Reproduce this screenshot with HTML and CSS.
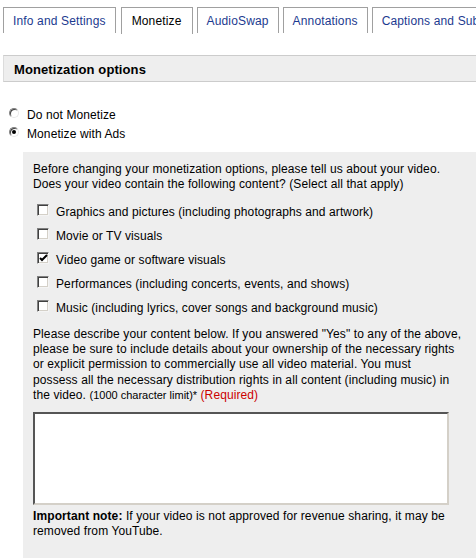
FILE: index.html
```html
<!DOCTYPE html>
<html>
<head>
<meta charset="utf-8">
<link rel="stylesheet" href="styles.css">
</head>
<body>
<div class="page">
  <div class="tabs">
    <div class="tab">Info and Settings</div>
    <div class="tab active">Monetize</div>
    <div class="tab">AudioSwap</div>
    <div class="tab">Annotations</div>
    <div class="tab">Captions and Subtitles</div>
  </div>
  <div class="section-head">Monetization options</div>
  <div class="radios">
    <label class="radio-row"><span class="radio"></span>Do not Monetize</label>
    <label class="radio-row"><span class="radio checked"></span>Monetize with Ads</label>
  </div>
  <div class="panel">
    <p class="intro">Before changing your monetization options, please tell us about your video.<br>Does your video contain the following content? (Select all that apply)</p>
    <div class="checks">
      <label class="check-row"><span class="cbox"></span>Graphics and pictures (including photographs and artwork)</label>
      <label class="check-row"><span class="cbox"></span>Movie or TV visuals</label>
      <label class="check-row"><span class="cbox checked"><svg width="9" height="9" viewBox="0 0 9 9"><path d="M1 4 L3 6 L8 1" fill="none" stroke="#000" stroke-width="2"/></svg></span>Video game or software visuals</label>
      <label class="check-row"><span class="cbox"></span>Performances (including concerts, events, and shows)</label>
      <label class="check-row"><span class="cbox"></span>Music (including lyrics, cover songs and background music)</label>
    </div>
    <p class="describe">Please describe your content below. If you answered "Yes" to any of the above,<br>please be sure to include details about your ownership of the necessary rights<br>or explicit permission to commercially use all video material. You must<br>possess all the necessary distribution rights in all content (including music) in<br>the video. <span class="small">(1000 character limit)*</span> <span class="req">(Required)</span></p>
    <div class="textarea"></div>
    <p class="note"><b>Important note:</b> If your video is not approved for revenue sharing, it may be<br>removed from YouTube.</p>
  </div>
</div>
</body>
</html>
```

FILE: styles.css
```css
html, body {
  margin: 0;
  padding: 0;
  background: #fff;
}
body {
  font-family: "Liberation Sans", Arial, sans-serif;
  font-size: 12px;
  color: #000;
}
.page {
  width: 476px;
  height: 559px;
  overflow: hidden;
}
.tabs {
  display: flex;
  gap: 4px;
  padding: 7px 0 0 3px;
  white-space: nowrap;
}
.tab {
  flex: none;
  height: 26px;
  line-height: 26px;
  padding: 0 9px;
  border: 1px solid #a0a0a0;
  border-bottom: none;
  font-size: 12px;
  letter-spacing: 0.15px;
  color: #1c3a8f;
  box-sizing: border-box;
}
.tab.active {
  color: #000;
  height: 27px;
  padding: 0 10px;
}
.tabs .tab:first-child {
  margin-right: 1px;
}
.section-head {
  margin: 21px 0 0 3px;
  height: 27px;
  line-height: 27px;
  box-sizing: border-box;
  background: #eeeeee;
  border-top: 1px solid #cccccc;
  border-bottom: 1px solid #cccccc;
  border-left: 1px solid #dcdcdc;
  padding-left: 10px;
  font-weight: bold;
  font-size: 13px;
  letter-spacing: 0.1px;
}
.radios {
  padding: 23px 0 0 9px;
}
.radio-row {
  display: flex;
  align-items: center;
  height: 19px;
  font-size: 12px;
  letter-spacing: 0.1px;
}
.radio {
  width: 10px;
  height: 10px;
  border-radius: 50%;
  box-sizing: border-box;
  border: 1px solid;
  border-color: #808080 #e8e8e8 #e8e8e8 #808080;
  background: #fff;
  margin: -4px 8px 0 0;
  position: relative;
  box-shadow: inset 1px 1px 0 #404040;
}
.radio.checked::after {
  content: "";
  position: absolute;
  left: 2px;
  top: 2px;
  width: 4px;
  height: 4px;
  border-radius: 50%;
  background: #000;
}
.panel {
  margin: 9px 0 0 23px;
  height: 406px;
  background: #eeeeee;
  padding: 10px 0 0 10px;
  box-sizing: border-box;
  letter-spacing: 0.1px;
  white-space: nowrap;
}
.intro {
  margin: 0;
  line-height: 15px;
}
.checks {
  display: flex;
  flex-direction: column;
  padding: 8px 0 0 4px;
}
.check-row {
  display: flex;
  align-items: center;
  height: 24px;
}
.cbox {
  width: 12px;
  height: 12px;
  box-sizing: border-box;
  border: 1px solid;
  border-color: #808080 #f4f4f4 #f4f4f4 #808080;
  box-shadow: inset 1px 1px 0 #404040, inset -1px -1px 0 #d4d0c8;
  background: #fff;
  margin: -4px 7px 0 0;
  display: flex;
  align-items: center;
  justify-content: center;
}
.cbox svg {
  display: block;
  margin: 1px 0 0 1px;
}
.describe {
  margin: 7px 0 0 0;
  line-height: 15.2px;
}
.small {
  font-size: 11px;
  letter-spacing: 0;
}
.req {
  color: #cc0000;
}
.textarea {
  margin-top: 9px;
  width: 416px;
  height: 93px;
  box-sizing: border-box;
  background: #fff;
  border: 2px solid;
  border-color: #555555 #d4d0c8 #d4d0c8 #555555;
}
.note {
  margin: 4px 0 0 0;
  line-height: 15px;
}
```
